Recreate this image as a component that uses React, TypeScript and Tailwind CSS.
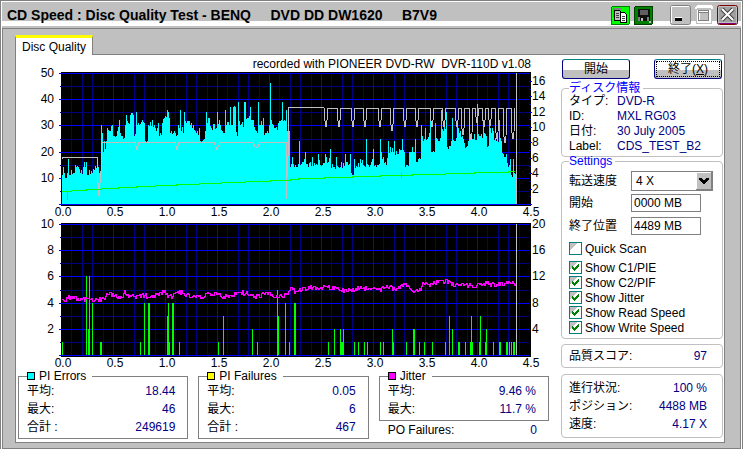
import React, { useId, useState } from 'react';

type Point = [number, number];

// Plot geometry shared by both charts, in viewBox units
const LEFT = 43;
const TOP = 2;
const BOTTOM = 133;
const RIGHT = 513;
const SPEED_STEP = 7.7;

const xTicks = ['0.0', '0.5', '1.0', '1.5', '2.0', '2.5', '3.0', '3.5', '4.0', '4.5'];

// PI errors along the disc: [column, error count]
const errorPoints: Point[] = [
  [44, 11], [45, 14], [46, 12], [47, 10], [49, 12], [50, 17], [51, 11], [53, 13], [55, 12], [57, 15], [58, 14], [60, 14], [62, 12], [65, 14], [68, 16], [69, 11], [71, 13], [74, 12], [76, 13], [79, 14], [80, 14],
  [81, 12], [82, 12], [83, 30], [84, 27], [85, 20], [86, 24], [87, 21], [88, 24], [89, 29], [92, 28], [94, 30], [96, 26], [99, 28], [101, 32], [102, 27], [105, 25], [107, 30], [108, 34], [110, 31], [112, 34],
  [115, 34], [116, 26], [118, 35], [120, 31], [124, 32], [126, 31], [127, 24], [129, 24], [130, 30], [134, 32], [137, 29], [140, 31], [142, 27], [144, 31], [146, 33], [149, 36], [151, 33], [153, 28],
  [157, 27], [160, 30], [162, 36], [163, 28], [166, 35], [168, 31], [172, 30], [175, 30], [178, 27], [181, 29], [184, 24], [187, 28], [188, 35], [189, 31], [191, 33], [193, 29], [198, 29], [199, 35],
  [202, 30], [205, 27], [207, 36], [208, 30], [212, 37], [214, 30], [215, 37], [217, 37], [219, 26], [220, 39], [222, 30], [226, 39], [227, 39], [229, 33], [232, 37], [235, 32], [238, 28], [240, 39],
  [242, 30], [245, 33], [248, 27], [251, 30], [252, 46], [253, 32], [257, 29], [260, 31], [264, 39], [266, 32], [268, 36], [269, 28], [270, 28], [271, 28], [272, 14], [274, 18], [276, 14], [279, 14], [281, 24], [282, 15], [284, 16],
  [287, 20], [290, 14], [294, 18], [297, 15], [300, 19], [304, 15], [307, 19], [310, 16], [312, 21], [315, 14], [318, 18], [322, 14], [327, 19], [330, 15], [332, 19], [334, 11], [336, 17], [339, 14],
  [342, 17], [345, 15], [348, 25], [350, 15], [353, 16], [355, 21], [357, 15], [360, 15], [362, 25], [365, 18], [367, 16], [370, 24], [373, 20], [376, 24], [380, 19], [384, 25], [386, 20], [388, 15],
  [391, 20], [393, 20], [397, 25], [399, 16], [402, 17], [403, 30], [405, 24], [407, 29], [409, 25], [412, 36], [414, 20], [417, 31], [420, 24], [423, 36], [425, 28], [428, 35], [432, 22], [434, 33],
  [437, 24], [439, 32], [442, 28], [445, 25], [449, 22], [451, 31], [455, 25], [459, 38], [461, 26], [465, 32], [468, 26], [470, 22], [471, 31], [475, 28], [478, 24], [481, 32], [483, 24], [485, 19],
  [488, 19], [490, 14], [492, 17], [493, 11], [495, 17], [496, 12], [498, 10],
];

// PI failures: [column, width, count]
const failures: [number, number, number][] = [
  [44, 1, 1], [68, 1, 6], [70, 1, 2], [71, 1, 6], [74, 1, 4], [82, 2, 1], [122, 1, 1], [126, 1, 4], [130, 2, 4], [149, 1, 3], [150, 1, 4],
  [151, 1, 1], [154, 2, 4], [161, 1, 1], [200, 1, 1], [205, 1, 3], [234, 1, 2], [239, 1, 1], [259, 1, 5], [260, 1, 3], [267, 1, 4], [271, 1, 1],
  [276, 2, 4], [310, 1, 1], [316, 1, 2], [322, 1, 2], [323, 2, 1], [325, 1, 2], [336, 1, 1], [340, 1, 1], [346, 1, 1], [349, 1, 1], [362, 1, 1],
  [365, 1, 1], [374, 1, 2], [375, 1, 1], [388, 1, 1], [395, 2, 2], [401, 1, 1], [406, 1, 1], [414, 1, 1], [427, 1, 1], [431, 1, 3], [434, 1, 2],
  [440, 2, 1], [447, 1, 1], [452, 3, 1], [453, 1, 3], [461, 1, 1], [462, 1, 3], [467, 2, 1], [468, 1, 2], [475, 1, 1], [481, 2, 1], [488, 2, 1],
  [491, 1, 1], [493, 1, 1], [495, 2, 1],
];

const jitterPoints: Point[] = [
  [44, 4.2], [54, 4.5], [60, 4.3], [74, 4.3], [86, 4.3], [89, 4.8], [96, 4.5], [104, 4.5], [106, 4.8], [112, 4.5], [140, 4.6], [146, 4.9], [150, 4.4], [161, 4.9], [168, 4.6],
  [184, 4.5], [190, 4.8], [205, 4.5], [226, 4.8], [238, 4.5], [250, 4.8], [256, 4.5], [263, 4.6], [269, 4.6], [272, 5.2], [276, 4.9], [292, 5.2], [310, 5.2], [325, 5], [340, 5.1], [360, 5],
  [368, 5.3], [376, 5], [386, 5.4], [395, 4.9], [402, 5.1], [405, 5.6], [410, 5.4], [426, 5.7], [436, 5.4], [449, 5.4], [456, 5.3], [465, 5.5], [480, 5.4], [490, 5.6], [497, 5.5],
];

// Dips in the drive's write speed: [column, bottom y]
const writeDips: Point[] = [
  [308, 56], [321, 56], [335, 56], [347, 56], [362, 56], [374, 60], [387, 56], [399, 56], [414, 56], [426, 56], [439, 56], [445, 64], [453, 69], [459, 52], [466, 56], [472, 55], [479, 68], [487, 72], [495, 68],
];

const noise = (n: number) => {
  const v = Math.sin(n * 127.1) * 43758.5453;
  return v - Math.floor(v) - 0.5;
};

const valueAt = (points: Point[], x: number) => {
  const next = points.findIndex(([px]) => px >= x);
  if (next <= 0) return points[0][1];
  const [x0, v0] = points[next - 1];
  const [x1, v1] = points[next];
  return v0 + ((v1 - v0) * (x - x0)) / (x1 - x0);
};

// Peaks stay one column wide, the columns between them sit at the lower neighbour
const errorAt = (x: number) => {
  const next = errorPoints.findIndex(([px]) => px >= x);
  const [x1, v1] = errorPoints[next];
  if (x1 === x) return v1;
  return Math.min(v1, errorPoints[next - 1][1]) + noise(x) * 3 + 0.5;
};

const errorPath = () => {
  let d = `M44 ${BOTTOM}`;
  for (let x = 44; x < 499; x++) {
    d += `V${Math.round(BOTTOM - errorAt(x) * 2.62)}H${x + 1}`;
  }
  return `${d}V${BOTTOM}Z`;
};

// Each column covers the span from the previous sample to the current one
const jitterPath = () => {
  let d = '';
  let last = 77;
  for (let x = 44; x < 498; x++) {
    const y = Math.round(BOTTOM - (valueAt(jitterPoints, x) + noise(x * 3) * 0.35) * 13.1);
    const top = Math.min(y, last);
    d += `M${x} ${top}h1V${Math.max(y, last) + 1}h-1z`;
    last = y;
  }
  return d;
};

const writePath = () => {
  let d = 'M44 88V86H79V98L81 125L83 100V71H117L119 79L121 71H157L159 79L161 71H196L199 79L202 71H235L237 76H240L242 71H268V128L270 85V36H304';
  writeDips.forEach(([x, y]) => {
    d += `L${x - 2} 37L${x - 1} ${y - 6}L${x} ${y}L${x + 1} ${y - 7}L${x + 2} 37`;
  });
  return d;
};

const Chart = ({ label, left, right, children }: { label: string; left: string[]; right: [string, number][]; children: React.ReactNode }) => {
  const rows = Array.from({ length: 11 }, (_, i) => Math.round(BOTTOM - i * 13.1));
  const cols = Array.from({ length: 45 }, (_, i) => Math.round(LEFT + i * 10.4));
  return (
    <svg viewBox="0 0 531 148" className="block h-auto w-full overflow-visible" role="img" aria-label={label}>
      <g shapeRendering="crispEdges">
        <rect x={LEFT} y={TOP - 1} width={RIGHT - LEFT} height={BOTTOM - TOP + 3} fill="#000" />
        {cols.map((x, i) => i > 0 && i % 5 !== 0 && <rect key={x} x={x} y={TOP} width="1" height={BOTTOM - TOP} fill="#000080" />)}
        {rows.map((y, i) => i % 2 === 1 && <rect key={y} x={LEFT - 1} y={y} width={RIGHT - LEFT - 1} height="1" fill="#000080" />)}
        {cols.map((x, i) => i > 0 && i % 5 === 0 && <rect key={x} x={x} y={TOP} width="1" height={BOTTOM - TOP} fill="#0000ff" />)}
        {rows.map((y, i) => i % 2 === 0 && <rect key={y} x={LEFT - 2} y={y} width={RIGHT - LEFT} height="1" fill="#0000ff" />)}
      </g>
      {children}
      <rect x="498" y={TOP} width="1" height={BOTTOM - TOP} fill="#c0c0c0" shapeRendering="crispEdges" />
      <g fontSize="12" fill="#000">
        {left.map((text, i) => (
          <text key={text} x="36" y={rows[10 - i * 2] + 4} textAnchor="end">{text}</text>
        ))}
        {right.map(([text, y]) => (
          <text key={text} x="514" y={y + 4}>{text}</text>
        ))}
        {xTicks.map((text, i) => (
          <text key={text} x={LEFT + 2 + i * 52} y="145" textAnchor="middle">{text}</text>
        ))}
      </g>
    </svg>
  );
};

const ErrorChart = () => (
  <Chart
    label="PI Errors"
    left={['50', '40', '30', '20', '10']}
    right={[16, 14, 12, 10, 8, 6, 4, 2].map((n) => [String(n), Math.round(BOTTOM - n * SPEED_STEP)])}
  >
    <g shapeRendering="crispEdges">
      <path d={errorPath()} fill="#00ffff" />
      {Array.from({ length: 17 }, (_, i) => (
        <rect key={i} x="511" y={Math.round(BOTTOM - i * SPEED_STEP)} width={i % 2 ? 2 : 3} height="1" fill="#0000ff" />
      ))}
      <path d={writePath()} fill="none" stroke="#c0c0c0" />
      <path
        d="M44 121V120H49V129V120H53V119H68V118H83V117H100V116H118V115H137V114H158V113H181V112H203V111H227V110H252V109H272V108H280V107H306V106H334V105H362V104H383V101V107V104H394V103H427V102H456V101H490V100H497"
        fill="none"
        stroke="#00ff00"
      />
    </g>
  </Chart>
);

const FailureChart = () => (
  <Chart
    label="PI Failures"
    left={['10', '8', '6', '4', '2']}
    right={[['20', 2], ['16', 28], ['12', 54], ['8', 81], ['4', 107]]}
  >
    <g shapeRendering="crispEdges">
      {failures.map(([x, width, count], i) => (
        <rect key={i} x={x} y={Math.round(BOTTOM - count * 13.1)} width={width} height={Math.round(count * 13.1)} fill="#00ff00" />
      ))}
      <path d={jitterPath()} fill="#ff00ff" />
    </g>
  </Chart>
);

const Row = ({ label, value }: { label: string; value: string }) => (
  <div className="flex justify-between leading-[18px]">
    <span>{label}</span>
    <span className="text-[#000080]">{value}</span>
  </div>
);

const StatBox = ({ title, swatch, children }: { title: string; swatch: string; children: React.ReactNode }) => (
  <fieldset className="min-w-0 border border-[#808080] pr-3 pb-[2px] pl-2">
    <legend className="flex items-center gap-1 pr-[6px] leading-3">
      <span className={`h-2 w-2 border border-black ${swatch}`} />
      {title}
    </legend>
    {children}
  </fieldset>
);

const Group = ({ title, className = '', children }: { title?: string; className?: string; children: React.ReactNode }) => (
  <fieldset className={`min-w-0 rounded border border-[#c0c0c0] px-[7px] ${className}`}>
    {title && <legend className="pr-[3px] leading-3 text-[#0000ff]">{title}</legend>}
    {children}
  </fieldset>
);

const CheckBox = ({ label, defaultChecked = false }: { label: string; defaultChecked?: boolean }) => {
  const id = useId();
  return (
    <div className="flex h-[15px] items-center gap-[3px]">
      <span className="relative h-[13px] w-[13px]">
        <input
          id={id}
          type="checkbox"
          defaultChecked={defaultChecked}
          className="peer block h-[13px] w-[13px] appearance-none border border-[#008080] bg-[linear-gradient(135deg,#c0c0c0_35%,#fff_35%)]"
        />
        <svg viewBox="0 0 13 13" className="pointer-events-none absolute inset-0 hidden h-[13px] w-[13px] peer-checked:block" shapeRendering="crispEdges">
          <path d="M3 5h1v1h1v1h1v-1h1v-1h1v-1h1v-1h1v3h-1v1h-1v1h-1v1h-1v1h-1v-1h-1v-1h-1z" fill="#008000" />
        </svg>
      </span>
      <label htmlFor={id}>{label}</label>
    </div>
  );
};

const PushButton = ({ children, focused = false }: { children: React.ReactNode; focused?: boolean }) => (
  <button className="h-5 w-[68px] rounded-[3px] border border-[#000080] border-t-[#008080] bg-[linear-gradient(#fff_55%,#c0c0c0_55%)] p-px leading-none">
    <span className={`flex h-full items-center justify-center ${focused ? 'border border-dotted border-black' : ''}`}>{children}</span>
  </button>
);

const TitleBar = () => (
  <header className="flex h-[26px] items-start bg-[linear-gradient(#c0c0c0_19px,#fff_19px,#fff_24px,#c0c0c0_24px)] pr-[3px] pl-[5px]">
    <h1 className="grow pt-[5px] text-[14px] leading-4 font-bold whitespace-pre">
      {'CD Speed : Disc Quality Test - BENQ     DVD DD DW1620     B7V9'}
    </h1>
    <div className="flex shrink-0 items-center pt-[3px]">
      <button aria-label="Copy" className="mr-1">
        <svg width="19" height="19" viewBox="0 0 19 19" shapeRendering="crispEdges">
          <rect width="19" height="19" rx="2" fill="#008000" />
          <path d="M1 1h17v17H1z" fill="#00ff00" />
          <path d="M2 2h10l-8 5-2 5z" fill="#808080" />
          <path d="M3.5 4.5h5l2 2v8h-7z" fill="#c0c0c0" stroke="#000" />
          <path d="M9.500 6.500h4l2 2v8h-6z" fill="#fff" stroke="#000" />
          <path d="M5 7h3M5 9h3M5 11h3M11 10.500h3M11 12.500h3M11 14.500h3" stroke="#404040" />
        </svg>
      </button>
      <button aria-label="Save" className="mr-[17px]">
        <svg width="19" height="19" viewBox="0 0 19 19" shapeRendering="crispEdges">
          <rect width="19" height="19" rx="2" fill="#004000" />
          <path d="M1 1h17v17H1z" fill="#008000" />
          <path d="M4 3h12v12H4z" fill="#101010" />
          <path d="M6 4h8v5H6z" fill="#606060" />
          <path d="M4 11h11v4H4z" fill="#808080" />
          <path d="M6 11h7v4H6z" fill="#101010" />
          <path d="M7 12h2v3H7zM15 15h2v2h-2z" fill="#c0c0c0" />
        </svg>
      </button>
      <button aria-label="Minimize" className="mr-1">
        <svg width="21" height="20" viewBox="0 0 21 20">
          <rect x=".5" y=".5" width="20" height="19" rx="2" fill="#c0c0c0" stroke="#808080" />
          <path d="M1.500 18V1.500H19" fill="none" stroke="#fff" />
          <path d="M5 13h7v3H5z" fill="#000" />
          <path d="M5 12h7v1H5z" fill="#fff" />
        </svg>
      </button>
      <button aria-label="Maximize" className="mr-1">
        <svg width="18" height="20" viewBox="0 0 18 20" shapeRendering="crispEdges">
          <path d="M1 1h16v18H1z" fill="#c0c0c0" />
          <path d="M0 4V2l2-2h14l2 2v2h-2V3H2v1z" fill="#fff" />
          <path d="M3.500 6h11v10h-11z" fill="none" stroke="#fff" strokeWidth="3" />
          <path d="M3.500 5.500h10v10h-10zM3 7.500h11" fill="none" stroke="#808080" />
        </svg>
      </button>
      <button aria-label="Close">
        <svg width="21" height="20" viewBox="0 0 21 20">
          <rect x=".5" y=".5" width="20" height="19" rx="2" fill="#c0c0c0" stroke="#800000" />
          <path d="M2 18.500h17" stroke="#800080" />
          <path d="M2 2h17v15H2z" fill="#a0a0a0" />
          <path d="M5 4l11 11M16 4L5 15" stroke="#404040" strokeWidth="4" />
          <path d="M5 4l11 11M16 4L5 15" stroke="#fff" strokeWidth="2" />
        </svg>
      </button>
    </div>
  </header>
);

const discInfo = [
  { label: 'タイプ:', value: 'DVD-R' },
  { label: 'ID:', value: 'MXL RG03' },
  { label: '日付:', value: '30 July 2005' },
  { label: 'Label:', value: 'CDS_TEST_B2' },
];

const Settings = () => {
  const [start, setStart] = useState('0000 MB');
  const [end, setEnd] = useState('4489 MB');
  return (
    <Group title="Settings" className="-mt-[2px] pb-[3px]">
      <div className="mt-1 grid grid-cols-[62px_1fr] items-center">
        <label htmlFor="speed">転送速度</label>
        <div className="relative mr-[2px] h-5">
          <select id="speed" className="block h-5 w-full appearance-none border border-[#808080] bg-white pl-1">
            <option>4 X</option>
            <option>8 X</option>
            <option>Maximum</option>
          </select>
          <svg viewBox="0 0 16 18" className="pointer-events-none absolute top-px right-px h-[18px] w-4" shapeRendering="crispEdges">
            <path d="M0 0h16v18H0z" fill="#808080" />
            <path d="M0 0h15v17H0z" fill="#fff" />
            <path d="M1 1h14v16H1z" fill="#c0c0c0" />
            <path d="M3 6h3v1h1v1h2V7h1V6h3v2h-1v1h-1v1h-1v1H9v1H7v-1H6v-1H5V9H4V8H3z" fill="#000" />
          </svg>
        </div>
      </div>
      <div className="mt-[3px] grid grid-cols-[62px_1fr] items-center">
        <label htmlFor="start">開始</label>
        <input id="start" value={start} onChange={(e) => setStart(e.target.value)} className="h-[18px] w-[70px] border border-[#808080] pl-[2px]" />
      </div>
      <div className="mt-[5px] grid grid-cols-[62px_1fr] items-center">
        <label htmlFor="end">終了位置</label>
        <input id="end" value={end} onChange={(e) => setEnd(e.target.value)} className="h-[18px] w-[70px] border border-[#808080] pl-[2px]" />
      </div>
      <div className="mt-[6px] mb-1">
        <CheckBox label="Quick Scan" />
      </div>
      <CheckBox label="Show C1/PIE" defaultChecked />
      <CheckBox label="Show C2/PIF" defaultChecked />
      <CheckBox label="Show Jitter" defaultChecked />
      <CheckBox label="Show Read Speed" defaultChecked />
      <CheckBox label="Show Write Speed" defaultChecked />
    </Group>
  );
};

const Sidebar = () => (
  <aside className="flex w-[162px] shrink-0 flex-col pt-1">
    <div className="mb-[3px] flex justify-between px-px">
      <PushButton>開始</PushButton>
      <PushButton focused>
        終了(<u>X</u>)
      </PushButton>
    </div>
    <Group title="ディスク情報" className="pb-[2px]">
      <dl className="grid grid-cols-[48px_1fr] leading-[15px]">
        {discInfo.map((item) => (
          <React.Fragment key={item.label}>
            <dt>{item.label}</dt>
            <dd className="whitespace-nowrap text-[#000080]">{item.value}</dd>
          </React.Fragment>
        ))}
      </dl>
    </Group>
    <Settings />
    <Group className="mt-[5px] py-[2px] pr-[15px]">
      <Row label="品質スコア:" value="97" />
    </Group>
    <Group className="mt-[6px] py-1 pr-[15px]">
      <Row label="進行状況:" value="100 %" />
      <Row label="ポジション:" value="4488 MB" />
      <Row label="速度:" value="4.17 X" />
    </Group>
  </aside>
);

const App: React.FC = () => (
  <div className="min-h-screen border border-[#808080] bg-white p-px font-['Liberation_Sans','Noto_Sans_CJK_JP',sans-serif] text-[12px] text-black">
    <TitleBar />
    <main className="border border-[#808080] bg-[#c0c0c0] pt-[6px] pr-[15px] pb-[5px] pl-3">
      <div role="tablist" className="flex">
        <button
          role="tab"
          aria-selected="true"
          className="relative -mb-px h-5 border-t-[3px] border-r border-l border-t-[#ffff00] border-r-[#808080] border-l-[#808080] bg-white px-[6px] leading-4"
        >
          Disc Quality
        </button>
      </div>
      <div role="tabpanel" className="flex gap-3 border border-[#808080] bg-white pr-px pb-[3px] pl-[2px]">
        <div className="min-w-0 grow">
          <p className="pt-[2px] pr-[18px] text-right leading-[14px] whitespace-pre">{'recorded with PIONEER DVD-RW  DVR-110D v1.08'}</p>
          <div className="flex flex-col gap-[3px]">
            <ErrorChart />
            <FailureChart />
          </div>
          <div className="grid grid-cols-3 items-start gap-[10px]">
            <StatBox title="PI Errors" swatch="bg-[#00ffff]">
              <Row label="平均:" value="18.44" />
              <Row label="最大:" value="46" />
              <Row label="合計 :" value="249619" />
            </StatBox>
            <StatBox title="PI Failures" swatch="bg-[#ffff00]">
              <Row label="平均:" value="0.05" />
              <Row label="最大:" value="6" />
              <Row label="合計 :" value="467" />
            </StatBox>
            <div>
              <StatBox title="Jitter" swatch="bg-[#ff00ff]">
                <Row label="平均:" value="9.46 %" />
                <Row label="最大:" value="11.7 %" />
              </StatBox>
              <div className="pr-3 pl-[9px]">
                <Row label="PO Failures:" value="0" />
              </div>
            </div>
          </div>
        </div>
        <Sidebar />
      </div>
    </main>
  </div>
);

export default App;
